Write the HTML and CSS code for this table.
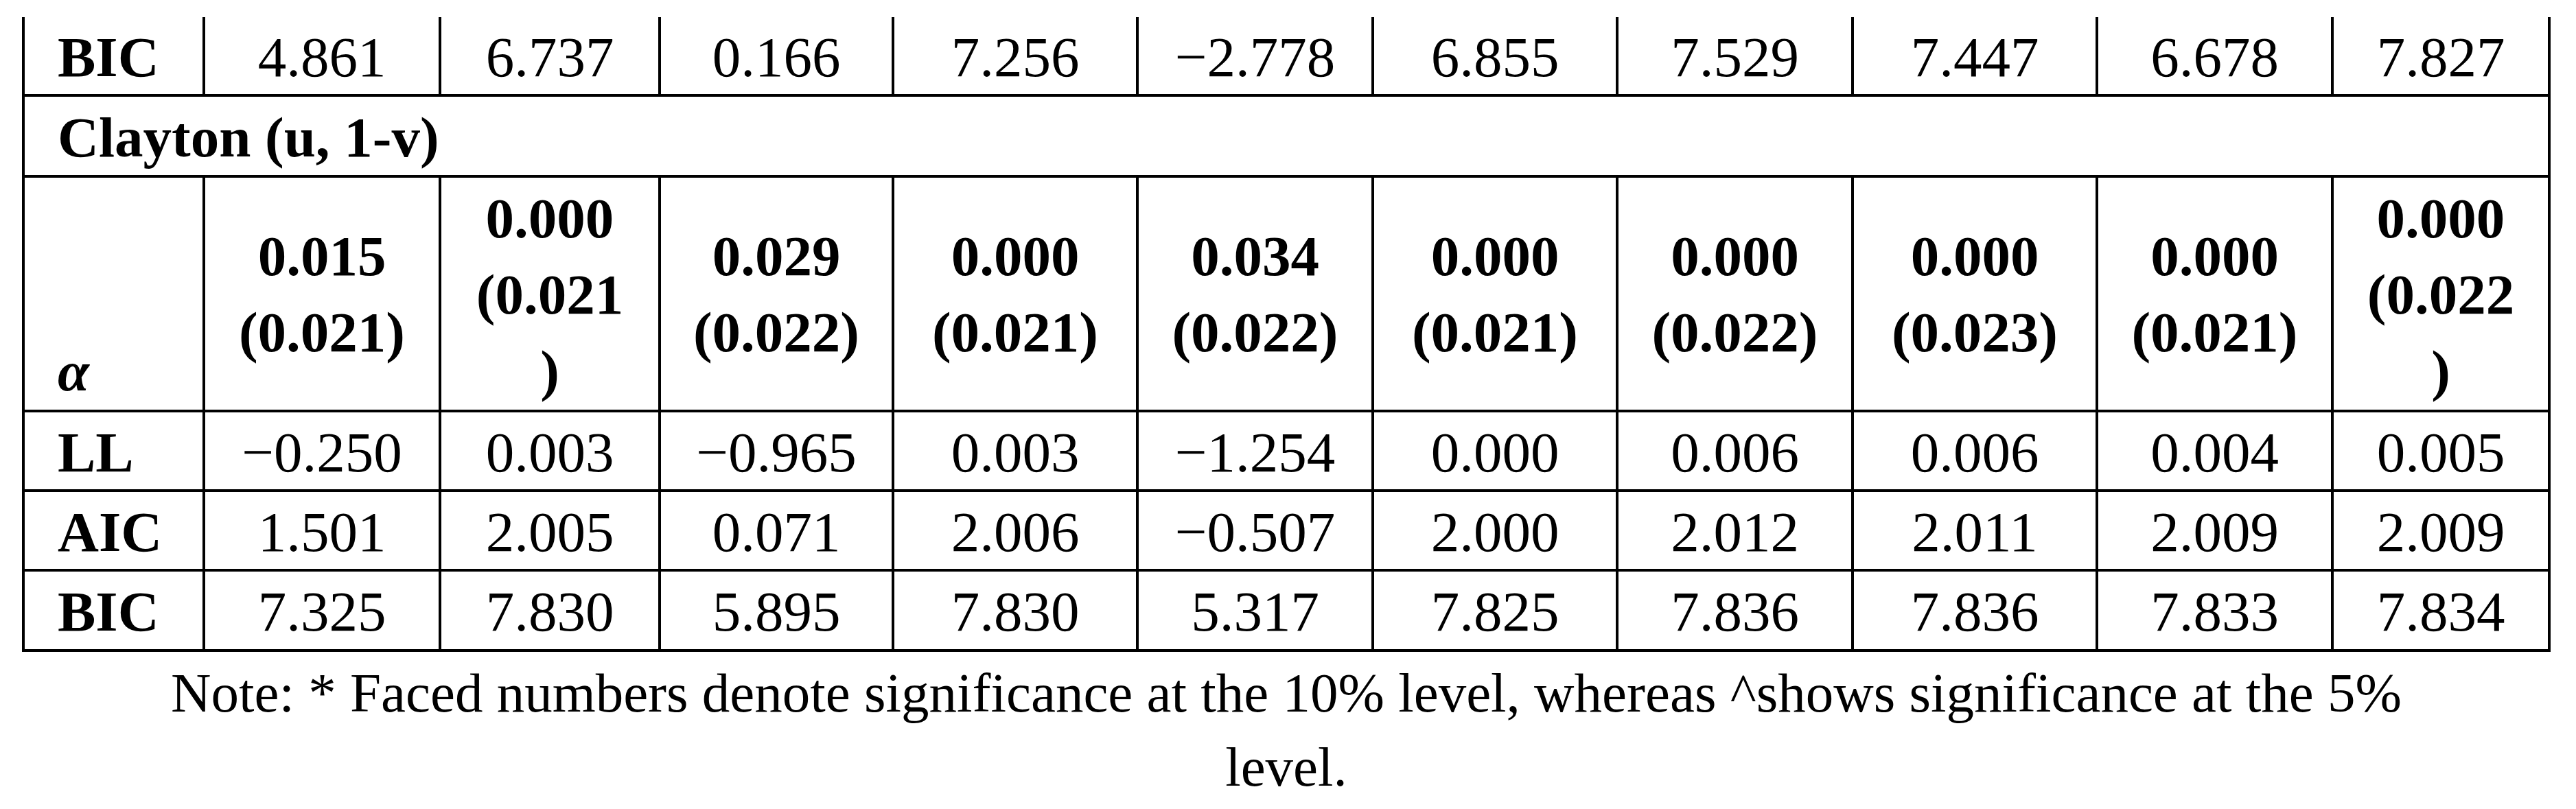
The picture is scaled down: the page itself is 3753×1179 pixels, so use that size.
FILE: index.html
```html
<!DOCTYPE html>
<html lang="en">
<head>
<meta charset="utf-8">
<title>Clayton copula estimates</title>
<link rel="stylesheet" href="styles.css">
</head>
<body>
<div class="page">
  <div class="tbl">
    <div class="c lab">BIC</div>
    <div class="c">4.861</div>
    <div class="c">6.737</div>
    <div class="c">0.166</div>
    <div class="c">7.256</div>
    <div class="c">−2.778</div>
    <div class="c">6.855</div>
    <div class="c">7.529</div>
    <div class="c">7.447</div>
    <div class="c">6.678</div>
    <div class="c">7.827</div>

    <div class="c lab span">Clayton (u, 1-v)</div>

    <div class="c lab alpha"><i>α</i></div>
    <div class="c b">0.015<br>(0.021)</div>
    <div class="c b">0.000<br>(0.021<br>)</div>
    <div class="c b">0.029<br>(0.022)</div>
    <div class="c b">0.000<br>(0.021)</div>
    <div class="c b">0.034<br>(0.022)</div>
    <div class="c b">0.000<br>(0.021)</div>
    <div class="c b">0.000<br>(0.022)</div>
    <div class="c b">0.000<br>(0.023)</div>
    <div class="c b">0.000<br>(0.021)</div>
    <div class="c b">0.000<br>(0.022<br>)</div>

    <div class="c lab">LL</div>
    <div class="c">−0.250</div>
    <div class="c">0.003</div>
    <div class="c">−0.965</div>
    <div class="c">0.003</div>
    <div class="c">−1.254</div>
    <div class="c">0.000</div>
    <div class="c">0.006</div>
    <div class="c">0.006</div>
    <div class="c">0.004</div>
    <div class="c">0.005</div>

    <div class="c lab">AIC</div>
    <div class="c">1.501</div>
    <div class="c">2.005</div>
    <div class="c">0.071</div>
    <div class="c">2.006</div>
    <div class="c">−0.507</div>
    <div class="c">2.000</div>
    <div class="c">2.012</div>
    <div class="c">2.011</div>
    <div class="c">2.009</div>
    <div class="c">2.009</div>

    <div class="c lab">BIC</div>
    <div class="c">7.325</div>
    <div class="c">7.830</div>
    <div class="c">5.895</div>
    <div class="c">7.830</div>
    <div class="c">5.317</div>
    <div class="c">7.825</div>
    <div class="c">7.836</div>
    <div class="c">7.836</div>
    <div class="c">7.833</div>
    <div class="c">7.834</div>
  </div>
  <p class="note">Note: * Faced numbers denote significance at the 10% level, whereas ^shows significance at the 5%<br>level.</p>
</div>
</body>
</html>
```

FILE: styles.css
```css
html, body {
  margin: 0;
  padding: 0;
  background: #ffffff;
}

.page {
  padding: 25px 0 0 32px;
  width: 3684px;
  font-family: "Liberation Serif", "Times New Roman", serif;
  color: #000000;
}

.tbl {
  display: grid;
  grid-template-columns: 259px 340px 316px 336px 352px 339px 352px 339px 352px 339px 312px;
  grid-template-rows: 112px 114px 338px 112px 112px 113px;
  gap: 4px;
  padding: 0 4px 4px 4px;
  background: #000000;
  width: max-content;
}

.c {
  background: #ffffff;
  display: flex;
  align-items: center;
  justify-content: center;
  text-align: center;
  font-size: 83px;
  line-height: 111px;
  padding-top: 4px;
  box-sizing: border-box;
}

.lab {
  justify-content: flex-start;
  text-align: left;
  font-weight: bold;
  padding-left: 48px;
}

.span {
  grid-column: 1 / -1;
}

.alpha {
  align-items: flex-end;
  padding-top: 0;
  padding-bottom: 0;
}

.b {
  font-weight: bold;
  padding-top: 2px;
}

.note {
  margin: 6px 0 0 0;
  text-align: center;
  font-size: 81px;
  line-height: 108px;
}
```
